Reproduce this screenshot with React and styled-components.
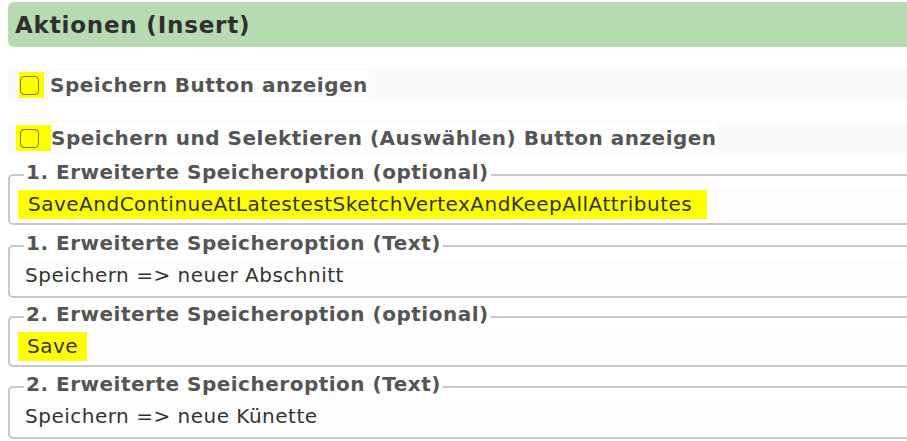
import React from 'react';
import styled, { createGlobalStyle } from 'styled-components';

const GlobalStyle = createGlobalStyle`
  html, body {
    margin: 0;
    padding: 0;
    overflow: hidden;
    background: #ffffff;
  }
  body {
    font-family: "DejaVu Sans", Verdana, sans-serif;
  }
`;

const Page = styled.div`
  width: 960px;
  padding: 2px 0 0 8px;
  display: flex;
  flex-direction: column;
`;

const SectionHeader = styled.h2`
  margin: 0;
  height: 45px;
  display: flex;
  align-items: center;
  padding-left: 7px;
  background: #b6dbb1;
  border-radius: 6px;
  color: #2f2f2f;
  font-size: 23px;
  letter-spacing: 0.8px;
  font-weight: bold;
`;

const CheckRow = styled.div`
  margin-top: ${({ gap }) => gap}px;
  height: 34px;
  display: flex;
  align-items: center;
  padding-left: ${({ indent }) => indent}px;
  background: #fafafa;
`;

const Marker = styled.span`
  display: inline-flex;
  align-items: center;
  height: ${({ h }) => h}px;
  padding: 0 ${({ right }) => right}px 0 ${({ left }) => left}px;
  background: #ffff00;
`;

const Box = styled.input.attrs({ type: 'checkbox' })`
  appearance: none;
  margin: 0;
  width: 19px;
  height: 19px;
  box-sizing: border-box;
  border: 1.5px solid rgba(70, 70, 0, 0.7);
  border-radius: 4px;
  background: transparent;
`;

const CheckLabel = styled.label`
  margin-left: ${({ offset }) => offset}px;
  height: 30px;
  display: flex;
  align-items: center;
  padding-right: 1px;
  background: #ffffff;
  color: #555555;
  font-size: 20px;
  letter-spacing: 0.5px;
  font-weight: bold;
`;

const Group = styled.fieldset`
  margin: ${({ gap }) => gap}px 0 0 0;
  padding: 0 0 ${({ tall }) => (tall ? 6 : 4)}px 10px;
  border: 2px solid #c8c8c8;
  border-radius: 5px;
  min-width: 0;
`;

const Legend = styled.legend`
  margin-left: 4px;
  padding: 0 2px 6px;
  line-height: 22px;
  color: #555555;
  font-size: 20px;
  letter-spacing: 0.5px;
  font-weight: bold;
`;

const Value = styled.div`
  height: 30px;
  display: flex;
  align-items: center;
  padding-left: ${({ highlighted }) => (highlighted ? 0 : 5)}px;
  background: #fdfdfd;
  color: #333333;
  font-size: 20px;
  letter-spacing: 0.5px;
`;

const options = [
  { legend: '1. Erweiterte Speicheroption (optional)', value: 'SaveAndContinueAtLatestestSketchVertexAndKeepAllAttributes', mark: [10, 15], gap: 6 },
  { legend: '1. Erweiterte Speicheroption (Text)', value: 'Speichern => neuer Abschnitt', gap: 7 },
  { legend: '2. Erweiterte Speicheroption (optional)', value: 'Save', mark: [9, 9], gap: 5 },
  { legend: '2. Erweiterte Speicheroption (Text)', value: 'Speichern => neue Künette', gap: 6 },
];

export default function App() {
  return (
    <>
      <GlobalStyle />
      <Page>
        <SectionHeader>Aktionen (Insert)</SectionHeader>
        <CheckRow gap={21} indent={11}>
          <Marker h={26} left={1} right={5}><Box /></Marker>
          <CheckLabel offset={6}>Speichern Button anzeigen</CheckLabel>
        </CheckRow>
        <CheckRow gap={19} indent={8}>
          <Marker h={26} left={4} right={12}><Box /></Marker>
          <CheckLabel offset={0}>Speichern und Selektieren (Auswählen) Button anzeigen</CheckLabel>
        </CheckRow>
        {options.map(opt => (
          <Group key={opt.legend} gap={opt.gap} tall={!opt.mark}>
            <Legend>{opt.legend}</Legend>
            <Value highlighted={!!opt.mark}>
              {opt.mark ? (
                <Marker h={29} left={opt.mark[0]} right={opt.mark[1]} style={{ marginLeft: -2 }}>
                  {opt.value}
                </Marker>
              ) : opt.value}
            </Value>
          </Group>
        ))}
      </Page>
    </>
  );
}
